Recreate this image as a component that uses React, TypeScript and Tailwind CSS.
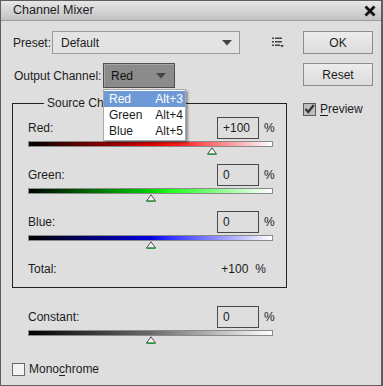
import React from 'react';

type Channel = {
  label: string;
  value: string;
  pct: number;
  track: string;
};

const channels: Channel[] = [
  { label: 'Red:', value: '+100', pct: 75, track: 'bg-[linear-gradient(to_right,#000000,#e00000_50%,#ff2020_62%,#ffffff)]' },
  { label: 'Green:', value: '0', pct: 50, track: 'bg-[linear-gradient(to_right,#000000,#00d000_50%,#20ff20_58%,#ffffff)]' },
  { label: 'Blue:', value: '0', pct: 50, track: 'bg-[linear-gradient(to_right,#000000,#0000e0_50%,#3030ff_58%,#ffffff)]' },
];

const Thumb = () => (
  <svg width="11" height="8" viewBox="0 0 11 8">
    <polygon points="5.5,0.8 10,7 1,7" fill="#f4f4f4" stroke="#4f4f4f" strokeWidth="1" />
    <line x1="1" y1="7.2" x2="10" y2="7.2" stroke="#2e9a44" strokeWidth="1.6" />
  </svg>
);

const Slider = ({ pct, track }: { pct: number; track: string }) => (
  <div className="relative mt-[2px] w-[245px] h-[14px]">
    <div className={`h-[6px] w-full border border-[#8a8a8a] ${track}`} />
    <div className="absolute top-[6px] -translate-x-1/2" style={{ left: `${pct}%` }}>
      <Thumb />
    </div>
  </div>
);

const ValueRow = ({ label, value }: { label: string; value: string }) => (
  <div className="flex items-center justify-between w-[245px] h-[22px]">
    <span>{label}</span>
    <div className="flex items-center">
      <div className="w-[42px] h-[22px] border border-[#4a4a4a] pl-[5px] flex items-center">{value}</div>
      <span className="ml-[5px] w-[9px]">%</span>
    </div>
  </div>
);

const Checkbox = ({ checked }: { checked?: boolean }) => (
  <div
    className={`w-[13px] h-[13px] border flex items-center justify-center ${
      checked ? 'border-[#5a5a5a] bg-[#bdbdbd]' : 'border-[#6a6a6a] bg-[#f2f2f2]'
    }`}
  >
    {checked && (
      <svg width="11" height="10" viewBox="0 0 11 10">
        <path d="M1.5 5 L4.3 8 L9.8 1" fill="none" stroke="#333" strokeWidth="2.2" />
      </svg>
    )}
  </div>
);

const Caret = () => (
  <svg width="10" height="6" viewBox="0 0 10 6">
    <polygon points="0,0 10,0 5,5.5" fill="#444" />
  </svg>
);

export default function App() {
  return (
    <div
      className="w-[383px] h-[386px] flex flex-col bg-[#dedede] border border-[#5e5e5e] border-r-2 text-[12px] text-[#1c1c1c] overflow-hidden"
      style={{ fontFamily: '"Liberation Sans", Arial, sans-serif' }}
    >
      {/* title bar */}
      <div className="h-[20px] shrink-0 flex items-center justify-between pl-[12px] pr-[4px] bg-[linear-gradient(to_bottom,#e6e6e6,#c3c3c3)] border-b border-[#9a9a9a]">
        <span className="text-[12.5px]">Channel Mixer</span>
        <svg width="12" height="12" viewBox="0 0 12 12" className="mr-[1px]">
          <path d="M1.5 1.5 L10.5 10.5 M10.5 1.5 L1.5 10.5" stroke="#111" strokeWidth="2.8" />
        </svg>
      </div>

      <div className="flex pt-[10px]">
        {/* left column */}
        <div className="ml-[11px] w-[291px] flex flex-col">
          <div className="flex items-center h-[23px]">
            <span className="w-[40px] pl-px">Preset:</span>
            <div className="w-[188px] h-[23px] border border-[#9a9a9a] bg-[#e3e3e3] flex items-center justify-between pl-[8px] pr-[7px]">
              <span>Default</span>
              <Caret />
            </div>
            <svg width="12" height="11" viewBox="0 0 12 11" className="ml-[32px]">
              <rect x="0" y="0.5" width="2" height="1.5" fill="#444" />
              <rect x="3" y="0.5" width="7" height="1.5" fill="#444" />
              <rect x="0" y="4" width="2" height="1.5" fill="#444" />
              <rect x="3" y="4" width="7" height="1.5" fill="#444" />
              <rect x="0" y="7.5" width="2" height="1.5" fill="#444" />
              <rect x="3" y="7.5" width="5" height="1.5" fill="#444" />
              <polygon points="8,8 12,8 10,10.5" fill="#444" />
            </svg>
          </div>

          <div className="relative flex items-center mt-[9px] h-[25px]">
            <span className="w-[91px] pl-[2px]">Output Channel:</span>
            <div className="w-[72px] h-[25px] border border-[#4e4e4e] bg-[#8b8b8b] shadow-[inset_1px_1px_0_#a5a5a5] flex items-center justify-between pl-[7px] pr-[8px]">
              <span className="text-[#111]">Red</span>
              <Caret />
            </div>

            {/* open dropdown menu */}
            <div className="absolute left-[91px] top-[26px] z-10 w-[83px] bg-white border border-[#a9a9a9] shadow-[2px_2px_2px_rgba(0,0,0,0.35)] py-px">
              {[
                ['Red', 'Alt+3'],
                ['Green', 'Alt+4'],
                ['Blue', 'Alt+5'],
              ].map(([name, key], i) => (
                <div
                  key={name}
                  className={`h-[16px] flex items-center justify-between pl-[5px] pr-[2px] ${
                    i === 0 ? 'bg-[#6d9ad6] text-white' : 'text-[#1c1c1c]'
                  }`}
                >
                  <span>{name}</span>
                  <span>{key}</span>
                </div>
              ))}
            </div>
          </div>

          <fieldset className="mt-[8px] w-[275px] border border-[#222] pl-[15px] pb-[7px]">
            <legend className="ml-[16px] px-[3px] leading-[14px]">Source Channels</legend>
            <div className="pt-[7px]">
              {channels.map((c) => (
                <div key={c.label} className="mb-[9px]">
                  <ValueRow label={c.label} value={c.value} />
                  <Slider pct={c.pct} track={c.track} />
                </div>
              ))}
              <div className="flex items-center justify-between w-[245px] h-[22px] mt-[5px]">
                <span>Total:</span>
                <span className="pr-[7px]">
                  +100<span className="ml-[7px]">%</span>
                </span>
              </div>
            </div>
          </fieldset>

          <div className="pl-[16px] mt-[18px]">
            <ValueRow label="Constant:" value="0" />
            <Slider pct={50} track="bg-[linear-gradient(to_right,#000000,#6a6a6a_50%,#ffffff)]" />
          </div>

          <div className="flex items-center mt-[16px]">
            <Checkbox />
            <span className="ml-[4px]">
              Mono<span className="underline underline-offset-2">c</span>hrome
            </span>
          </div>
        </div>

        {/* right column */}
        <div className="flex flex-col">
          {['OK', 'Reset'].map((t, i) => (
            <div
              key={t}
              className={`w-[70px] h-[23px] border border-[#8c8c8c] bg-[linear-gradient(to_bottom,#ececec,#dcdcdc)] flex items-center justify-center ${
                i === 1 ? 'mt-[9px]' : ''
              }`}
            >
              {t}
            </div>
          ))}
          <div className="flex items-center mt-[14px]">
            <Checkbox checked />
            <span className="ml-[4px]">
              <span className="underline underline-offset-2">P</span>review
            </span>
          </div>
        </div>
      </div>
    </div>
  );
}
